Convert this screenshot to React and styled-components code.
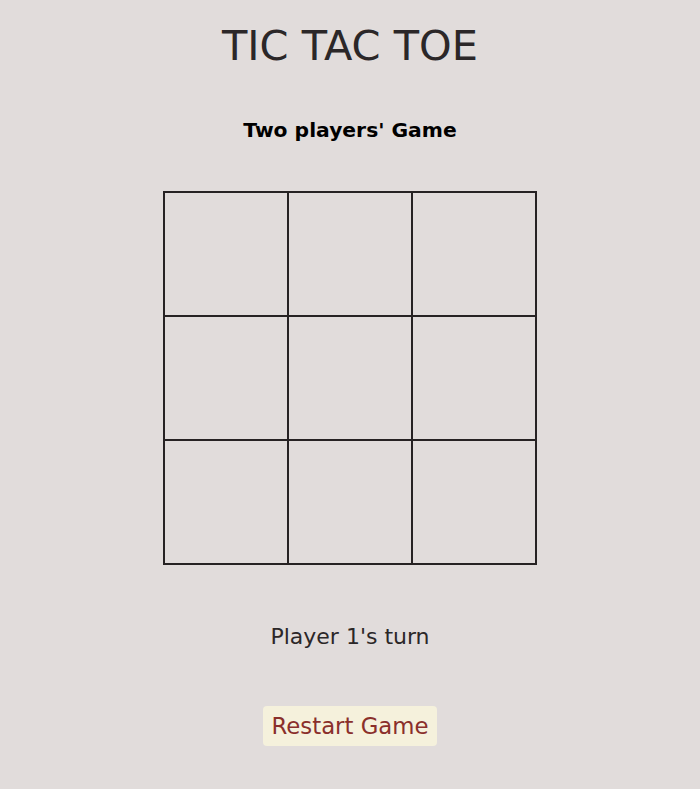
import React, { useState } from 'react';
import styled, { createGlobalStyle } from 'styled-components';

const GlobalStyle = createGlobalStyle`
  body {
    margin: 0;
    background: #e1dcdb;
    font-family: "DejaVu Sans", Verdana, sans-serif;
  }
`;

const Page = styled.main`
  display: flex;
  flex-direction: column;
  align-items: center;
  min-height: 789px;
`;

const Title = styled.h1`
  margin: 22px 0 0 0;
  font-size: 41.5px;
  font-weight: 400;
  line-height: 48px;
  color: #2b2728;
`;

const Subtitle = styled.h3`
  margin: 48px 0 0 0;
  font-size: 20.3px;
  font-weight: 700;
  line-height: 24px;
  color: #000;
`;

const Board = styled.div`
  display: grid;
  grid-template-columns: repeat(3, 124px);
  grid-template-rows: repeat(3, 124px);
  margin-top: 49px;
  border: 1px solid #262223;
`;

const Cell = styled.button`
  border: 1px solid #262223;
  background: transparent;
  padding: 0;
  font-family: inherit;
  font-size: 64px;
  color: #2b2728;
  cursor: pointer;
`;

const Status = styled.p`
  margin: 58px 0 0 0;
  font-size: 22px;
  line-height: 28px;
  color: #2b2728;
`;

const RestartButton = styled.button`
  margin-top: 55px;
  padding: 6px 8px;
  border: none;
  border-radius: 4px;
  background: #f5f1dc;
  color: #8a2f2b;
  font-family: inherit;
  font-size: 22.8px;
  line-height: 28px;
  cursor: pointer;
`;

const App = () => {
  const [cells, setCells] = useState(Array(9).fill(''));
  const [player, setPlayer] = useState(1);

  const play = (i) => {
    if (cells[i]) return;
    const next = [...cells];
    next[i] = player === 1 ? 'X' : 'O';
    setCells(next);
    setPlayer(player === 1 ? 2 : 1);
  };

  const restart = () => {
    setCells(Array(9).fill(''));
    setPlayer(1);
  };

  return (
    <Page>
      <GlobalStyle />
      <Title>TIC TAC TOE</Title>
      <Subtitle>Two players' Game</Subtitle>
      <Board>
        {cells.map((c, i) => (
          <Cell key={i} onClick={() => play(i)}>
            {c}
          </Cell>
        ))}
      </Board>
      <Status>Player {player}'s turn</Status>
      <RestartButton onClick={restart}>Restart Game</RestartButton>
    </Page>
  );
};

export default App;
